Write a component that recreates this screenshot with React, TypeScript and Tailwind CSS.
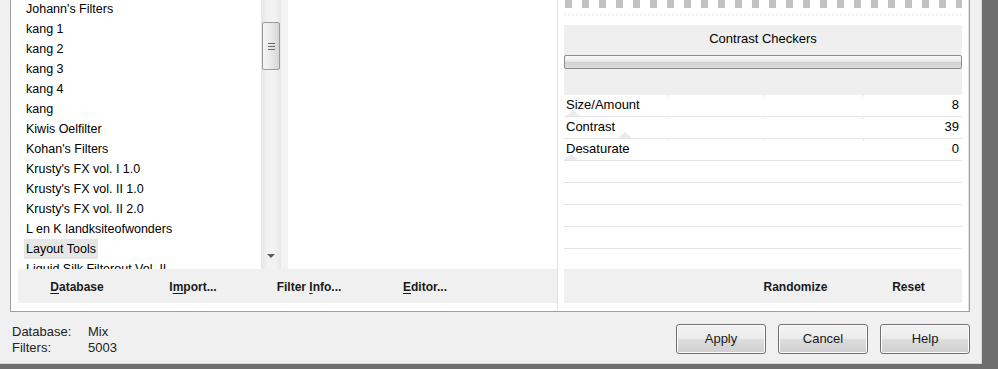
const filters = [
  "Johann's Filters",
  'kang 1',
  'kang 2',
  'kang 3',
  'kang 4',
  'kang',
  'Kiwis Oelfilter',
  "Kohan's Filters",
  "Krusty's FX vol. I 1.0",
  "Krusty's FX vol. II 1.0",
  "Krusty's FX vol. II 2.0",
  'L en K landksiteofwonders',
  'Layout Tools',
  'Liquid Silk Filterout Vol. II',
];

const params = [
  { name: 'Size/Amount', value: '8', thumb: 'ml-[2px]' },
  { name: 'Contrast', value: '39', thumb: 'ml-[54px]' },
  { name: 'Desaturate', value: '0', thumb: 'ml-[0px]' },
];

function Thumb({ className }: { className: string }) {
  return (
    <div
      className={`absolute bottom-0 left-0 h-0 w-0 border-x-[7px] border-b-[6px] border-x-transparent border-b-[#ebebeb] ${className}`}
    />
  );
}

function ParamRow({ name, value, thumb }: { name?: string; value?: string; thumb?: string }) {
  return (
    <div className="relative flex h-[22px] shrink-0 items-center justify-between border-b border-[#e4e4e4] pb-[2px] pl-[2px] pr-[3px]">
      {thumb && <Thumb className={thumb} />}
      {name && (
        <>
          <div className="absolute left-[103px] top-0 h-[2px] w-px bg-[#ececec]" />
          <div className="absolute left-[200px] top-0 h-[2px] w-px bg-[#ececec]" />
          <div className="absolute left-[299px] top-0 h-[2px] w-px bg-[#ececec]" />
        </>
      )}
      <span className="relative">{name}</span>
      <span className="relative">{value}</span>
    </div>
  );
}

function Ul({ children }: { children: string }) {
  return <span className="underline underline-offset-2">{children}</span>;
}

function WinButton({ label }: { label: string }) {
  return (
    <button className="h-[30px] w-[90px] rounded-[3px] border border-[#707070] bg-[linear-gradient(#f3f3f3,#ebebeb_48%,#dddddd_52%,#cfcfcf)] text-[13px] text-[#1a1a1a] shadow-[inset_0_0_0_1px_#fcfcfc]">
      {label}
    </button>
  );
}

export default function App() {
  return (
    <div className="flex h-[369px] w-[998px] overflow-hidden bg-[#6e6e6e] font-['Liberation_Sans',Arial,sans-serif] text-black">
      <div className="flex h-[364px] w-[982px] shrink-0 flex-col border-b border-r border-[#d8d8d8] bg-[#f0f0f0]">
        {/* group box */}
        <div className="ml-[10px] flex h-[312px] w-[960px] shrink-0 border-x border-b border-[#a0a0a0] bg-white">
          {/* left column */}
          <div className="flex w-[546px] shrink-0 flex-col">
            <div className="flex h-[269px] shrink-0">
              <div className="w-[250px] overflow-hidden text-[12.5px] leading-[20px]">
                <div className="-mt-px">
                  {filters.map((f) => (
                    <div key={f} className="h-[20px] pl-[13px]">
                      <span
                        className={`inline-block whitespace-nowrap px-[2px] ${
                          f === 'Layout Tools' ? 'bg-[#e6e6e6]' : ''
                        }`}
                      >
                        {f}
                      </span>
                    </div>
                  ))}
                </div>
              </div>
              {/* scrollbar */}
              <div className="relative w-[20px] bg-[linear-gradient(90deg,#e4e4e4,#f2f2f2_30%,#f2f2f2_70%,#e8e8e8)]">
                <div className="absolute left-[1px] top-[22px] flex h-[48px] w-[18px] flex-col items-center justify-center gap-[2px] rounded-[2px] border border-[#9a9a9a] bg-[linear-gradient(90deg,#f4f4f4,#e9e9e9_50%,#d6d6d6)]">
                  <div className="h-px w-[7px] bg-[#6a6a6a]" />
                  <div className="h-px w-[7px] bg-[#6a6a6a]" />
                  <div className="h-px w-[7px] bg-[#6a6a6a]" />
                </div>
                <div className="absolute left-[6px] top-[254px] h-0 w-0 border-x-[4px] border-t-[4px] border-x-transparent border-t-[#5a5a5a]" />
              </div>
              <div className="w-[7px] bg-[#f3f3f3]" />
              <div className="flex-1 bg-white" />
            </div>
            <div className="ml-[7px] grid h-[34px] w-[539px] shrink-0 grid-cols-[repeat(4,116px)] items-center bg-[#f0f0f0] pl-[1px] pt-[2px] text-[12px] font-bold text-[#1a1a1a]">
              <span className="text-center">
                <Ul>D</Ul>atabase
              </span>
              <span className="text-center">
                I<Ul>m</Ul>port...
              </span>
              <span className="text-center">
                Filter <Ul>I</Ul>nfo...
              </span>
              <span className="text-center">
                <Ul>E</Ul>ditor...
              </span>
            </div>
          </div>

          {/* right column */}
          <div className="flex w-[412px] shrink-0 flex-col border-x border-[#e2e2e2] px-[6px]">
            <div className="h-[8px] shrink-0 bg-[repeating-linear-gradient(90deg,#fff_0_1px,#c2c2c2_1px_8px,#fff_8px_17px)]" />
            <div className="mt-[5px] h-[3px] shrink-0 bg-[repeating-linear-gradient(90deg,#f2f2f2_0_2px,#fff_2px_4px)]" />
            <div className="mt-[9px] flex h-[70px] shrink-0 flex-col bg-[#efefef]">
              <div className="pt-[6px] text-center text-[13px] leading-[16px]">Contrast Checkers</div>
              <div className="mt-[8px] h-[14px] rounded-[2px] border border-[#8c8c8c] bg-[linear-gradient(#fbfbfb,#e8e8e8_45%,#d2d2d2_55%,#dcdcdc)]" />
            </div>
            <div className="flex h-[174px] shrink-0 flex-col overflow-hidden text-[13px]">
              {params.map((p) => (
                <ParamRow key={p.name} {...p} />
              ))}
              {Array.from({ length: 5 }).map((_, i) => (
                <ParamRow key={i} />
              ))}
            </div>
            <div className="grid h-[34px] shrink-0 grid-cols-[113px_113px] items-center bg-[#f0f0f0] pl-[175px] pt-[2px] text-[12px] font-bold text-[#1a1a1a]">
              <span className="text-center">Randomize</span>
              <span className="text-center">Reset</span>
            </div>
          </div>
        </div>

        {/* footer */}
        <div className="flex flex-1 items-start">
          <div className="grid grid-cols-[76px_auto] content-start pl-[12px] pt-[12px] text-[13px] leading-[16px] text-[#222]">
            <span>Database:</span>
            <span>Mix</span>
            <span>Filters:</span>
            <span>5003</span>
          </div>
          <div className="ml-auto mr-[11px] mt-[12px] flex gap-[12px]">
            <WinButton label="Apply" />
            <WinButton label="Cancel" />
            <WinButton label="Help" />
          </div>
        </div>
      </div>
    </div>
  );
}
